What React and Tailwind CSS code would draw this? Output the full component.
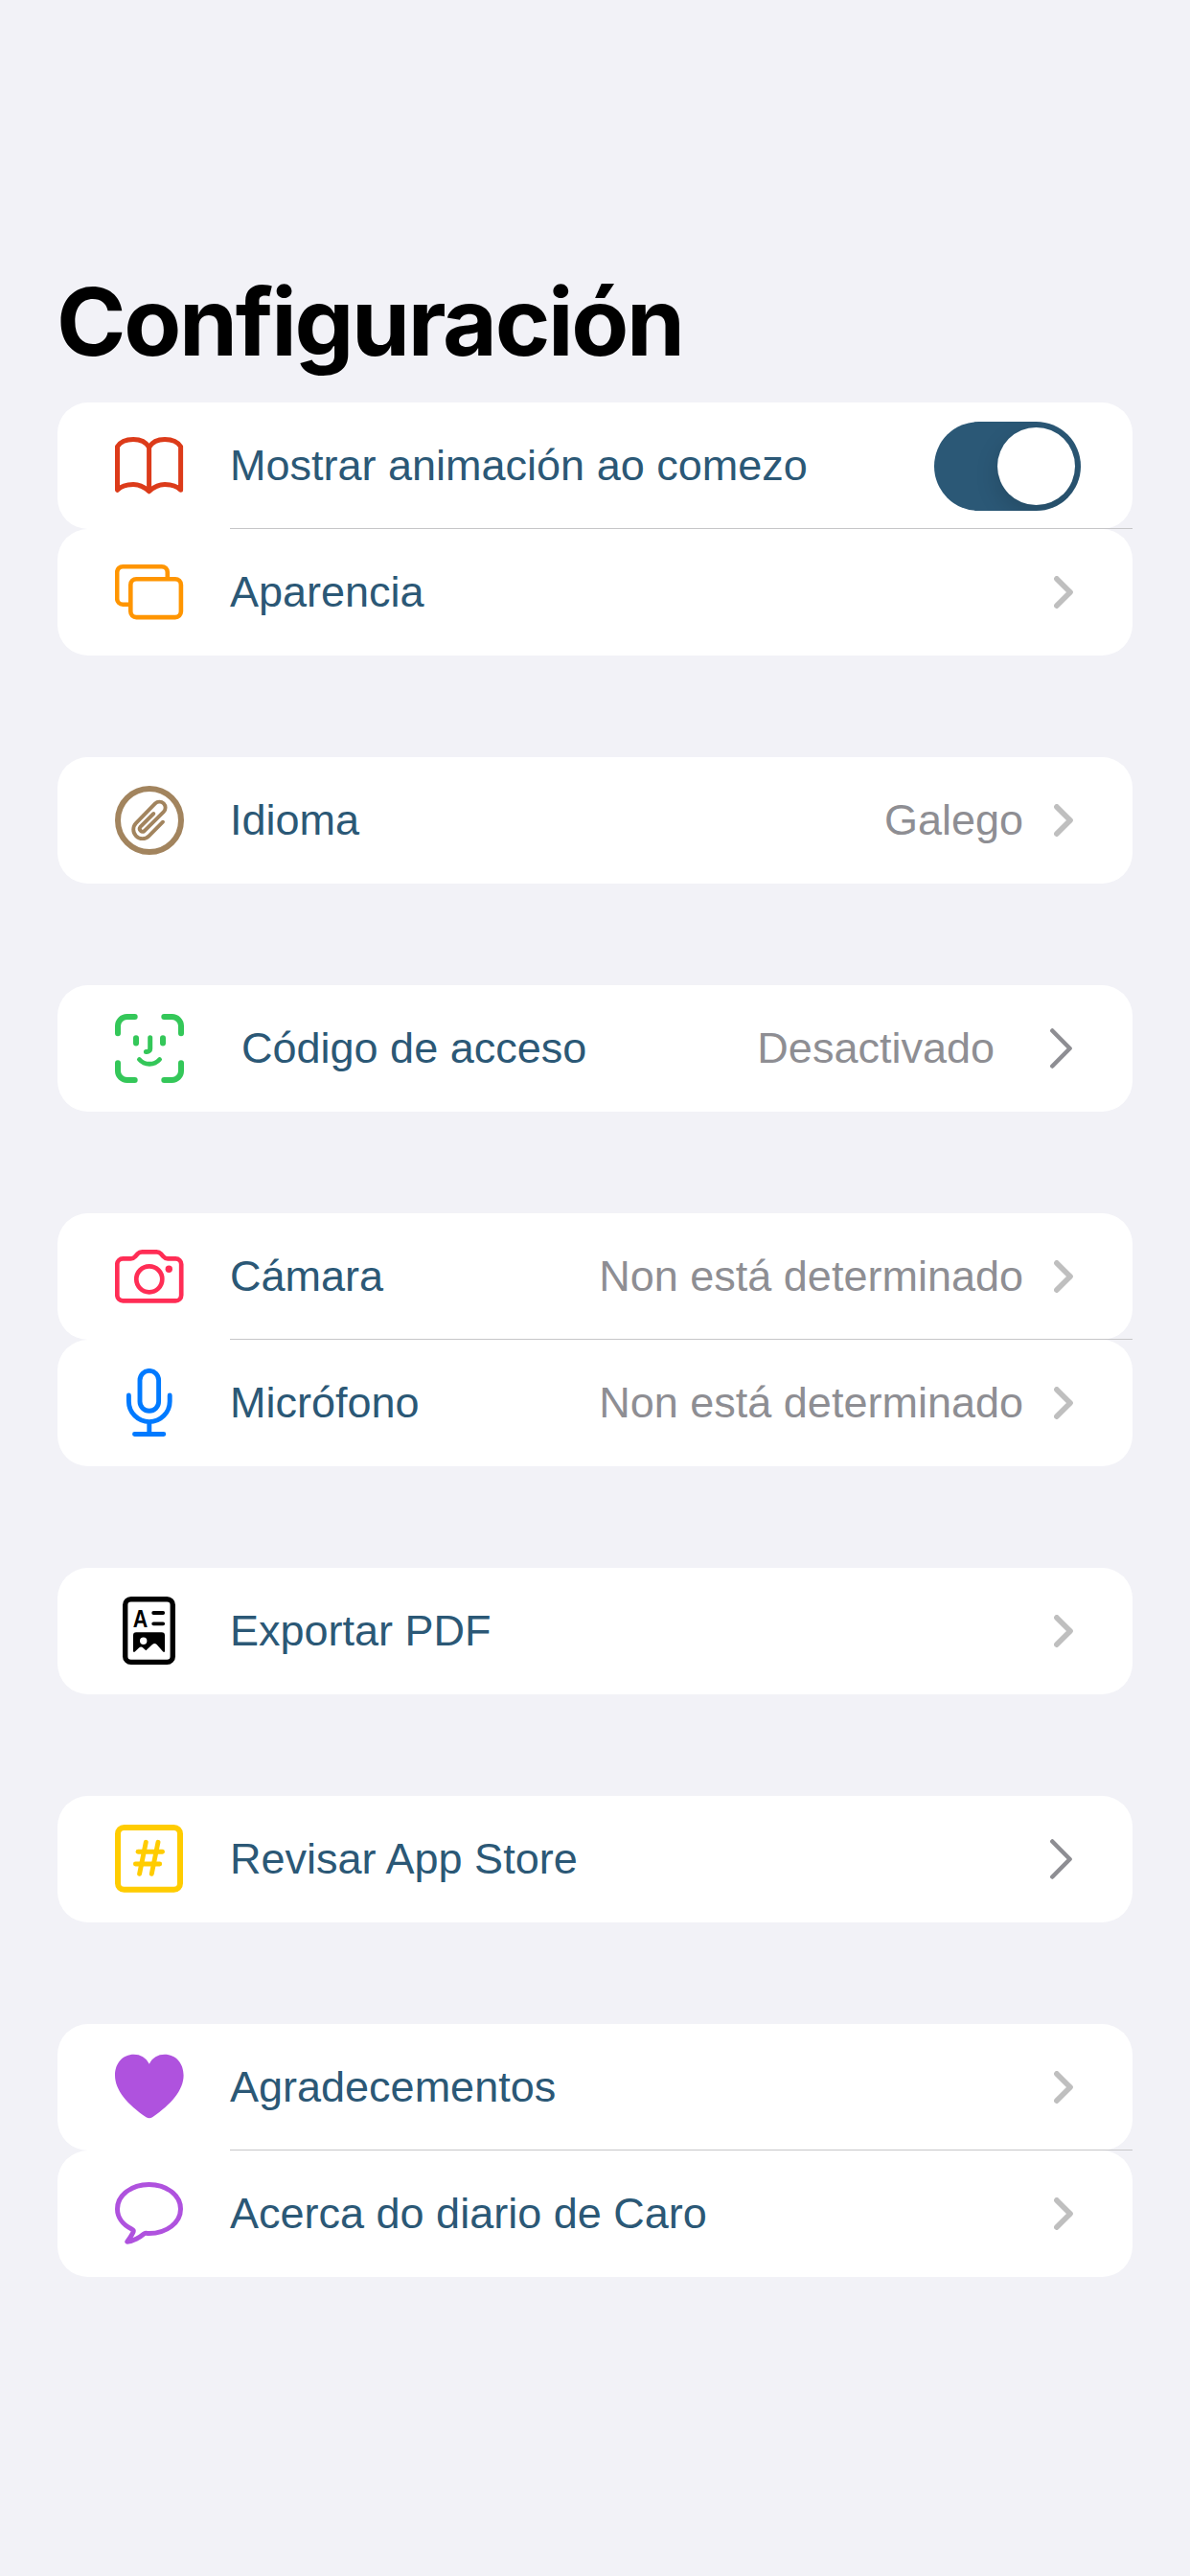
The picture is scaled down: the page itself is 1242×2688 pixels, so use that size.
import React from "react";

const stroke = {
  fill: "none",
  stroke: "currentColor",
  strokeLinecap: "round",
  strokeLinejoin: "round",
};

function Icon({ className, children }) {
  return (
    <svg viewBox="0 0 72 72" className={`h-[72px] w-[72px] shrink-0 ${className}`} aria-hidden="true">
      {children}
    </svg>
  );
}

const BookIcon = () => (
  <Icon className="text-[#dc3b1a]">
    <g {...stroke} strokeWidth="5">
      <path d="M2.5 61.3V16C5.5 11 12 8.4 19.2 8.4C26.5 8.4 32.5 11.4 35.6 16.6C38.7 11.4 44.7 8.4 52 8.4C59.2 8.4 65.6 11 68.6 16V61.3C65 57.6 59 55.5 52 55.5C45 55.5 39.8 58.8 35.6 62.8C31.4 58.8 26.2 55.5 19.2 55.5C12.2 55.5 6.1 57.6 2.5 61.3Z" />
      <path d="M35.6 17V62" />
    </g>
  </Icon>
);

const WindowsIcon = () => (
  <Icon className="text-[#ff9500]">
    <g {...stroke} strokeWidth="4.6" strokeLinecap="butt">
      <path d="M14.5 48.7H8.2a6 6 0 0 1-6-6V15.2a6 6 0 0 1 6-6h40.6a6 6 0 0 1 6 6V21" />
      <rect x="16.3" y="22.2" width="52.6" height="39.9" rx="6" />
    </g>
  </Icon>
);

const PaperclipIcon = () => (
  <Icon className="text-[#a2845e]">
    <circle cx="36" cy="36" r="33" {...stroke} strokeWidth="6" />
    <path
      {...stroke}
      strokeWidth="3.9"
      d="M50 37.7L35.4 52.3A9.4 9.4 0 0 1 22 38.9L42 18.4A6.2 6.2 0 0 1 50.8 27.2L30.6 47.1A3 3 0 0 1 26.4 42.9L40.3 29"
    />
  </Icon>
);

const FaceIcon = () => (
  <Icon className="text-[#34c759]">
    <g {...stroke} strokeWidth="6">
      <path d="M3 20.3V12.5a9.5 9.5 0 0 1 9.5-9.5h8.2M51.3 3h8.2a9.5 9.5 0 0 1 9.5 9.5v7.8M69 51.3v8.2a9.5 9.5 0 0 1-9.5 9.5h-8.2M20.7 69h-8.2a9.5 9.5 0 0 1-9.5-9.5v-8.2" />
      <path d="M22 25.2v5.4M50 25.2v5.4" />
    </g>
    <path {...stroke} strokeWidth="5" d="M36.7 24.7V36.2a3.4 3.4 0 0 1-3.4 3.4h-.9" />
    <path {...stroke} strokeWidth="4.8" d="M25.4 47.5C31 53.8 41 53.8 46.6 47.5" />
  </Icon>
);

const CameraIcon = () => (
  <Icon className="text-[#ff2d55]">
    <g {...stroke} strokeWidth="4.7">
      <path d="M8.3 17.3H16.5C18.8 17.3 19.8 16.7 21.3 15L23.7 12.3C25 10.8 26.2 10.3 28.2 10.3H43.4C45.4 10.3 46.6 10.8 47.9 12.3L50.3 15C51.8 16.7 52.8 17.3 55.1 17.3H63.2a6 6 0 0 1 6 6V55.4a6 6 0 0 1-6 6H8.3a6 6 0 0 1-6-6V23.3a6 6 0 0 1 6-6Z" />
      <circle cx="35.8" cy="38.8" r="13.5" />
    </g>
    <circle cx="56.3" cy="28.3" r="3.7" fill="currentColor" />
  </Icon>
);

const MicIcon = () => (
  <Icon className="text-[#007aff]">
    <g {...stroke} strokeWidth="4.9">
      <rect x="26" y="2.4" width="19.6" height="41.9" rx="9.8" />
      <path d="M14.4 28V34.2a21.4 21.4 0 0 0 42.8 0V28M35.8 56V68M20.5 68.5H50.8" />
    </g>
  </Icon>
);

const DocumentIcon = () => (
  <Icon className="text-black">
    <rect x="10.7" y="2.7" width="49.6" height="65.7" rx="6" {...stroke} strokeWidth="5.4" />
    <text
      x="26.6"
      y="31.6"
      textAnchor="middle"
      textLength="15.5"
      lengthAdjust="spacingAndGlyphs"
      fill="currentColor"
      className="font-['Liberation_Sans',sans-serif] text-[25px] font-bold"
    >
      A
    </text>
    <path {...stroke} strokeWidth="3.8" d="M40.2 17H50.2M40.2 28.3H50.2" />
    <path
      fill="currentColor"
      fillRule="evenodd"
      d="M22.5 37.3H48.7a3.3 3.3 0 0 1 3.3 3.3V56.8C52 58.2 50.8 58.2 50.2 57.5L43.6 50C42.2 48.5 40.5 48.5 39 50L32.3 56.2L29.3 53.4C28 52.2 26.3 52.2 25 53.4L20.8 57.6C20 58.2 19 58 19 56.8V40.6a3.3 3.3 0 0 1 3.5-3.3ZM29.7 42.6a3.7 3.7 0 1 0 0 7.4a3.7 3.7 0 1 0 0-7.4Z"
    />
  </Icon>
);

const NumberIcon = () => (
  <Icon className="text-[#ffcc00]">
    <rect x="3" y="3" width="65" height="64.7" rx="6.5" {...stroke} strokeWidth="6" />
    <g {...stroke} strokeWidth="4.9">
      <line x1="24.1" y1="28.3" x2="49.5" y2="28.3" />
      <line x1="21.4" y1="41" x2="46.7" y2="41" />
      <line x1="32.3" y1="18.3" x2="25.6" y2="51.3" />
      <line x1="45" y1="18.3" x2="38.3" y2="51.3" />
    </g>
  </Icon>
);

const HeartIcon = () => (
  <Icon className="text-[#af52de]">
    <path
      fill="currentColor"
      d="M35.8 11.7C32.5 5 26.5 1.7 19.8 1.7C8 1.7 0 11 0 23.5C0 39 13 54 32.5 67.2C35 68.7 36.6 68.7 39.1 67.2C58.6 54 71.6 39 71.6 23.5C71.6 11 63.6 1.7 51.8 1.7C45 1.7 39 5 35.8 11.7Z"
    />
  </Icon>
);

const BubbleIcon = () => (
  <Icon className="text-[#af52de]">
    <path
      {...stroke}
      strokeWidth="5"
      d="M32 56.3C33.2 56.4 34.3 56.5 35.5 56.5C54 56.5 68.5 45.3 68.5 31C68.5 16.7 54 5.5 35.5 5.5C17 5.5 2.5 16.7 2.5 31C2.5 39.5 8 47.3 17 51.7C19.5 52.9 19.8 53.8 18.6 56C17.3 58.8 15 62 12.8 65.2C18.5 65 26.5 60.3 30 57.2C30.8 56.5 31.3 56.3 32 56.3Z"
    />
  </Icon>
);

function Chevron({ large }) {
  return large ? (
    <svg viewBox="0 0 23 42" className="mr-px h-[42px] w-[23px] shrink-0 text-[#8e8e93]" aria-hidden="true">
      <path {...stroke} strokeWidth="4.5" d="M2.3 2.5L20.6 21L2.3 39.5" />
    </svg>
  ) : (
    <svg viewBox="0 0 20 34" className="h-[34px] w-[20px] shrink-0 text-[#bfbfbf]" aria-hidden="true">
      <path {...stroke} strokeWidth="5.7" d="M2.9 2.9L17 17L2.9 31.1" />
    </svg>
  );
}

function Toggle() {
  return (
    <span
      role="switch"
      aria-checked="true"
      className="-mr-2 mt-px flex h-[93px] w-[153px] shrink-0 items-center justify-end overflow-hidden rounded-full bg-[#2b5876] p-[6px]"
    >
      <span className="h-[81px] w-[81px] rounded-full bg-white shadow-[0_9px_24px_rgba(0,0,0,0.15)]" />
    </span>
  );
}

function Row({ icon: RowIcon, label, value, toggle, large, indent, divided }) {
  return (
    <div className="relative flex h-[132px] items-center rounded-[32px] bg-white pl-[60px] pr-[62px]">
      <RowIcon />
      <span className={`${indent ? "ml-[60px]" : "ml-12"} flex-1 whitespace-nowrap text-[#2b5876]`}>{label}</span>
      {value && (
        <span className={`${large ? "mr-[58px]" : "mr-8"} whitespace-nowrap text-[#8e8e93]`}>{value}</span>
      )}
      {toggle ? <Toggle /> : <Chevron large={large} />}
      {divided && <span className="absolute bottom-0 left-[180px] right-0 h-px bg-[#c6c6c8]" />}
    </div>
  );
}

const groups = [
  [
    { icon: BookIcon, label: "Mostrar animación ao comezo", toggle: true },
    { icon: WindowsIcon, label: "Aparencia" },
  ],
  [{ icon: PaperclipIcon, label: "Idioma", value: "Galego" }],
  [{ icon: FaceIcon, label: "Código de acceso", value: "Desactivado", large: true, indent: true }],
  [
    { icon: CameraIcon, label: "Cámara", value: "Non está determinado" },
    { icon: MicIcon, label: "Micrófono", value: "Non está determinado" },
  ],
  [{ icon: DocumentIcon, label: "Exportar PDF" }],
  [{ icon: NumberIcon, label: "Revisar App Store", large: true }],
  [
    { icon: HeartIcon, label: "Agradecementos" },
    { icon: BubbleIcon, label: "Acerca do diario de Caro" },
  ],
];

export default function App() {
  return (
    <main className="h-[2688px] w-[1242px] bg-[#f2f2f7] px-[60px] font-['Liberation_Sans',Arial,sans-serif] text-[45px] leading-[52px]">
      <header className="flex h-[420px] items-end pb-6">
        <h1 className="-ml-px whitespace-nowrap font-[Inter,sans-serif] text-[98px] font-bold leading-[120px] tracking-[-2.3px] text-black">
          Configuración
        </h1>
      </header>
      <div className="flex flex-col gap-[106px]">
        {groups.map((rows, g) => (
          <section key={g} className="flex flex-col">
            {rows.map((row, i) => (
              <Row key={row.label} {...row} divided={i < rows.length - 1} />
            ))}
          </section>
        ))}
      </div>
    </main>
  );
}
